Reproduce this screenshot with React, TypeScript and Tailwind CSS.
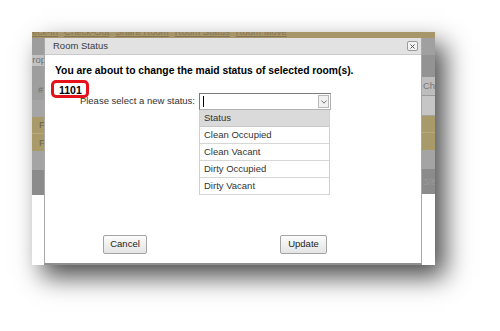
const statuses = ['Clean Occupied', 'Clean Vacant', 'Dirty Occupied', 'Dirty Vacant'];

const navLinks = ['Check-In', 'Check-Out', 'Share Room', 'Room Status', 'Room Move'];

export default function App() {
  return (
    <div
      className="w-[500px] h-[331px] bg-white pt-[32px] pl-[32px] overflow-hidden"
      style={{ fontFamily: '"Liberation Sans", Arial, sans-serif' }}
    >
      {/* SCREENSHOT */}
      <div className="w-[403px] h-[233px] flex flex-col bg-white shadow-[10px_12px_24px_rgba(0,0,0,0.7)]">
        {/* TOP NAV (cut off) */}
        <div className="h-[6px] bg-[#a8966b] overflow-hidden">
          <div className="flex gap-[6px] ml-[-12px] mt-[-6px] text-[9.5px] leading-[12px] text-[#857552] underline whitespace-nowrap">
            {navLinks.map((l) => (
              <span key={l}>{l}</span>
            ))}
          </div>
        </div>

        <div className="flex flex-1">
          {/* LEFT STRIP */}
          <div className="w-[12px] flex flex-col text-[9.5px] leading-[12px] text-[#6e6e6e] overflow-hidden">
            <div className="h-[17px] bg-[#9d9d9d]" />
            <div className="h-[11px] bg-[#c2c2c2] overflow-hidden">
              <span className="block ml-[-6px] mt-[-1px]">Prop</span>
            </div>
            <div className="h-[34px] bg-[#9e9e9e] flex items-end pb-[4px] pl-[6px]">#</div>
            <div className="h-[17px] bg-[#a5a5a5]" />
            <div className="h-[17px] bg-[#a99a6a] border-b border-[#b8aa7c] flex items-center pl-[7px] text-[#6b6248]">F</div>
            <div className="h-[17px] bg-[#a99a6a] flex items-center pl-[7px] text-[#6b6248]">F</div>
            <div className="h-[19px] bg-[#a4a4a4]" />
            <div className="h-[25px] bg-[#8b8b8b]" />
            <div className="flex-1 bg-white" />
          </div>

          {/* DIALOG */}
          <div className="w-[378px] h-[227px] flex flex-col bg-white border-x border-[#a9a9a9] border-b-2 border-b-[#8f8f8f]">
            {/* TITLE */}
            <div className="h-[17px] bg-[#e2e2e2] border-b border-[#cacaca] flex items-center justify-between pl-[8px] pr-[3px]">
              <span className="text-[9.5px] text-[#3a3a3a]">Room Status</span>
              <div className="w-[11px] h-[10px] border border-[#9a9a9a] bg-[#f3f3f3] rounded-[2px] flex items-center justify-center">
                <svg width="5" height="5" viewBox="0 0 5 5">
                  <path d="M0.5 0.5L4.5 4.5M4.5 0.5L0.5 4.5" stroke="#555" strokeWidth="1" />
                </svg>
              </div>
            </div>

            {/* BODY */}
            <div className="flex-1 flex flex-col pt-[10px]">
              <div className="pl-[10px] text-[10.3px] leading-[12px] font-bold text-black whitespace-nowrap">
                You are about to change the maid status of selected room(s).
              </div>
              <div className="pl-[14px] h-[12px]">
                <span className="relative inline-block text-[10.5px] leading-[12px] font-bold text-black">
                  1101
                  <span className="absolute -left-[8px] -right-[7px] -top-[4px] -bottom-[2px] border-[3px] border-[#e5121c] rounded-[5px]" />
                </span>
              </div>

              {/* SELECT ROW */}
              <div className="flex items-center mt-[4px] h-[17px]">
                <div className="w-[150px] text-right text-[9.5px] text-[#333]">Please select a new status:</div>
                <div className="ml-[4px] w-[132px] h-[17px] border border-[#7c7c7c] border-r-[#b0b0b0] border-b-[#b0b0b0] bg-white flex items-center justify-between pl-[3px] pr-[1px]">
                  <div className="w-[1px] h-[11px] bg-black" />
                  <div className="w-[11px] h-[13px] border border-[#b8b8b8] bg-[#f1f1f1] flex items-center justify-center">
                    <svg width="6" height="4" viewBox="0 0 6 4">
                      <path d="M0.5 0.5L3 3.2L5.5 0.5" stroke="#777" strokeWidth="1" fill="none" />
                    </svg>
                  </div>
                </div>
              </div>

              {/* DROPDOWN LIST */}
              <div className="ml-[154px] w-[131px] border-x border-[#d2d2d2] text-[9.5px] text-[#333]">
                <div className="h-[17px] bg-[#dadada] border-b border-[#c8c8c8] flex items-center pl-[4px]">Status</div>
                {statuses.map((s) => (
                  <div key={s} className="h-[17px] bg-white border-b border-[#d6d6d6] flex items-center pl-[4px]">
                    {s}
                  </div>
                ))}
              </div>

              {/* BUTTONS */}
              <div className="flex mt-[40px] pl-[58px]">
                <button className="w-[44px] h-[19px] border border-[#a3a3a3] rounded-[2px] bg-gradient-to-b from-[#fcfcfc] to-[#e4e4e4] text-[9.5px] text-[#222]">
                  Cancel
                </button>
                <button className="ml-[133px] w-[47px] h-[19px] border border-[#a3a3a3] rounded-[2px] bg-gradient-to-b from-[#fcfcfc] to-[#e4e4e4] text-[9.5px] text-[#222]">
                  Update
                </button>
              </div>
            </div>
          </div>

          {/* RIGHT STRIP */}
          <div className="w-[13px] flex flex-col text-[9.5px] leading-[12px] text-[#777] overflow-hidden">
            <div className="h-[17px] bg-[#a0a0a0]" />
            <div className="h-[22px] bg-[#939393]" />
            <div className="h-[19px] bg-[#bdbdbd] border-b border-[#9a9a9a] flex items-center whitespace-nowrap pl-[1px]">Check</div>
            <div className="h-[20px] bg-[#c6c6c6] border-b border-[#a3a3a3]" />
            <div className="h-[17px] bg-[#a99a6a] border-b border-[#b8aa7c]" />
            <div className="h-[17px] bg-[#a99a6a]" />
            <div className="h-[19px] bg-[#a4a4a4]" />
            <div className="h-[25px] bg-[#8b8b8b] flex items-center pl-[1px] text-[#999] whitespace-nowrap">3/8</div>
            <div className="flex-1 bg-white" />
          </div>
        </div>
      </div>
    </div>
  );
}
